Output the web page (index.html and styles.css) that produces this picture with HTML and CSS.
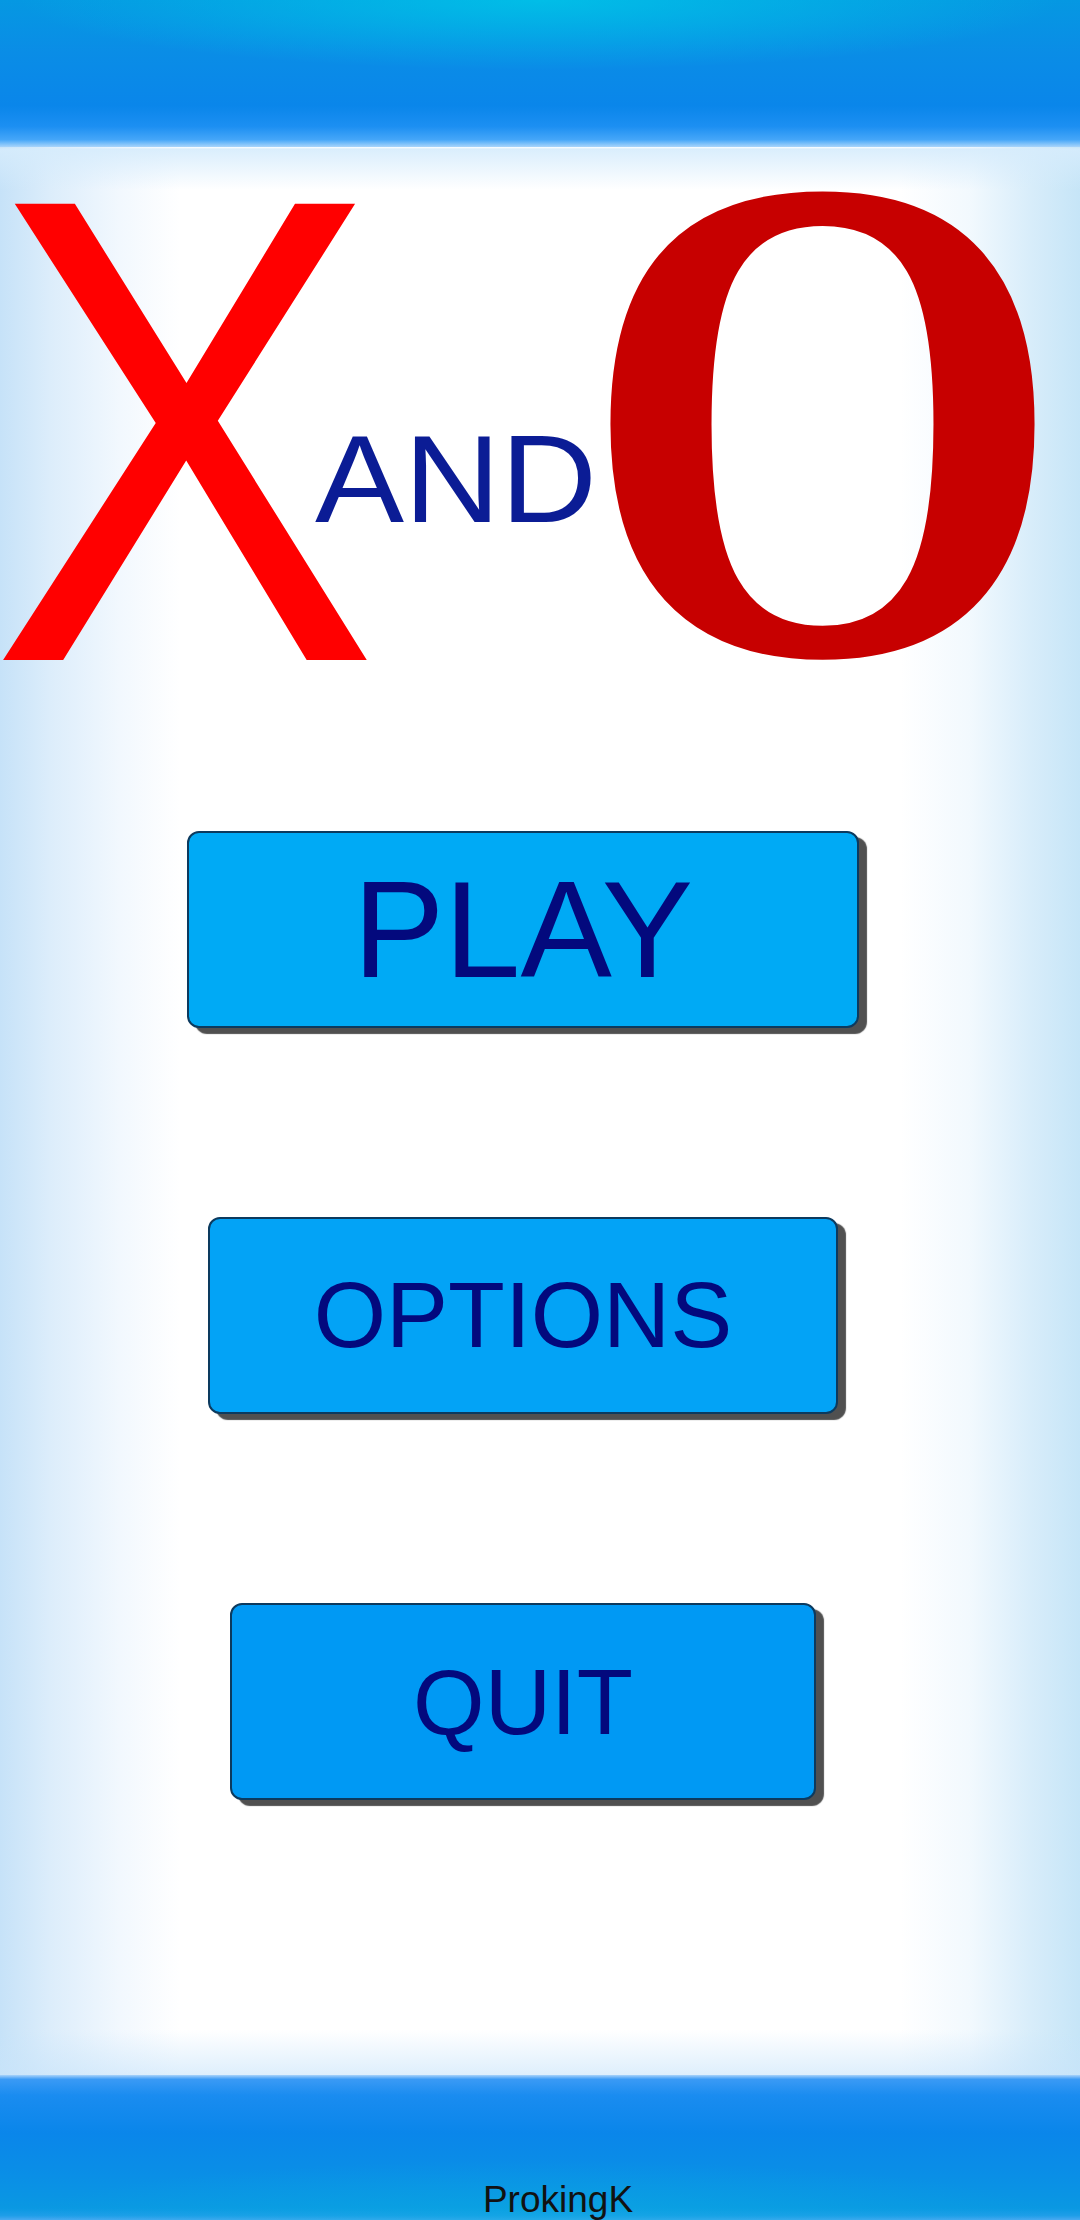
FILE: index.html
```html
<!DOCTYPE html>
<html lang="en">
<head>
<meta charset="utf-8">
<title>X and O</title>
<link rel="stylesheet" href="styles.css">
</head>
<body>
<div class="screen">
  <header class="top-bar"></header>
  <svg class="logo" viewBox="0 0 1080 534" width="1080" height="534" aria-label="X and O">
    <text class="logo-x" x="-10" y="513" textLength="389" lengthAdjust="spacingAndGlyphs">X</text>
    <text class="logo-and" x="315" y="375" textLength="282" lengthAdjust="spacingAndGlyphs">AND</text>
    <text class="logo-o" x="580" y="506" textLength="485" lengthAdjust="spacingAndGlyphs">O</text>
  </svg>
  <main class="menu">
    <button class="menu-btn btn-play">PLAY</button>
    <button class="menu-btn btn-options">OPTIONS</button>
    <button class="menu-btn btn-quit">QUIT</button>
  </main>
  <footer class="bottom-bar">
    <span class="credit">ProkingK</span>
  </footer>
</div>
</body>
</html>
```

FILE: styles.css
```css
html, body {
  margin: 0;
  padding: 0;
}

body {
  width: 1080px;
  height: 2220px;
  overflow: hidden;
  font-family: "Liberation Sans", Arial, sans-serif;
  background:
    linear-gradient(to bottom, rgba(255,255,255,0) 147px, rgba(214,236,252,0.9) 149px, rgba(255,255,255,0) 190px),
    linear-gradient(to bottom, rgba(255,255,255,0) 2030px, rgba(200,228,250,0.6) 2075px),
    linear-gradient(to right, #c6e2f8 0, #dcedfb 50px, #f2f8fe 120px, #ffffff 180px, #ffffff 900px, #f2f9fe 970px, #d8edfa 1030px, #c6e5f7 1080px);
}

.screen {
  width: 1080px;
  height: 2220px;
  display: flex;
  flex-direction: column;
}

.top-bar {
  height: 147px;
  flex: none;
  background:
    radial-gradient(ellipse 520px 70px at 50% 0, rgba(0, 196, 232, 0.85), rgba(0, 196, 232, 0) 100%),
    linear-gradient(to bottom, #0598e2 0, #0a8de6 35%, #0a86ea 72%, #1c8ff2 86%, #45a6f8 95%, #a9d5fb 100%);
}

.logo {
  display: block;
  flex: none;
  overflow: visible;
}

.logo-x {
  font-family: "Liberation Sans", Arial, sans-serif;
  font-size: 663px;
  fill: #ff0000;
}

.logo-and {
  font-family: "Liberation Sans", Arial, sans-serif;
  font-size: 124px;
  fill: #0b1c95;
}

.logo-o {
  font-family: "Liberation Serif", "Times New Roman", serif;
  font-weight: bold;
  font-size: 697px;
  fill: #c70000;
}

.menu {
  flex: 1;
  display: flex;
  flex-direction: column;
  align-items: center;
  gap: 189px;
  padding: 150px 34px 0 0;
}

.menu-btn {
  box-sizing: border-box;
  height: 197px;
  display: flex;
  align-items: center;
  justify-content: center;
  border: 2px solid #0c3a5e;
  border-radius: 12px;
  box-shadow: 8px 6px 1px #505050;
  font-family: "Liberation Sans", Arial, sans-serif;
  line-height: 1;
  color: #03097d;
  padding: 0;
  margin: 0;
}

.btn-play {
  width: 672px;
  font-size: 137px;
  background: #00aaf5;
}

.btn-options {
  width: 630px;
  font-size: 93px;
  background: #03a3f6;
}

.btn-quit {
  width: 586px;
  font-size: 92px;
  background: #0099f4;
}

.bottom-bar {
  height: 145px;
  flex: none;
  display: flex;
  flex-direction: column;
  justify-content: flex-end;
  align-items: center;
  padding: 0 0 2px 36px;
  box-sizing: border-box;
  background:
    radial-gradient(ellipse 520px 60px at 50% 100%, rgba(10, 170, 226, 0.6), rgba(10, 170, 226, 0) 100%),
    linear-gradient(to bottom, #a9d3fa 0, #3a9af5 3%, #1a8cf0 14%, #0a86ea 40%, #0a8fe6 70%, #0a98e2 92%, #1f9ee8 97%, #4aa9f2 100%);
}

.credit {
  font-family: "Liberation Sans", Arial, sans-serif;
  font-size: 37px;
  line-height: 1;
  color: #121212;
}
```
